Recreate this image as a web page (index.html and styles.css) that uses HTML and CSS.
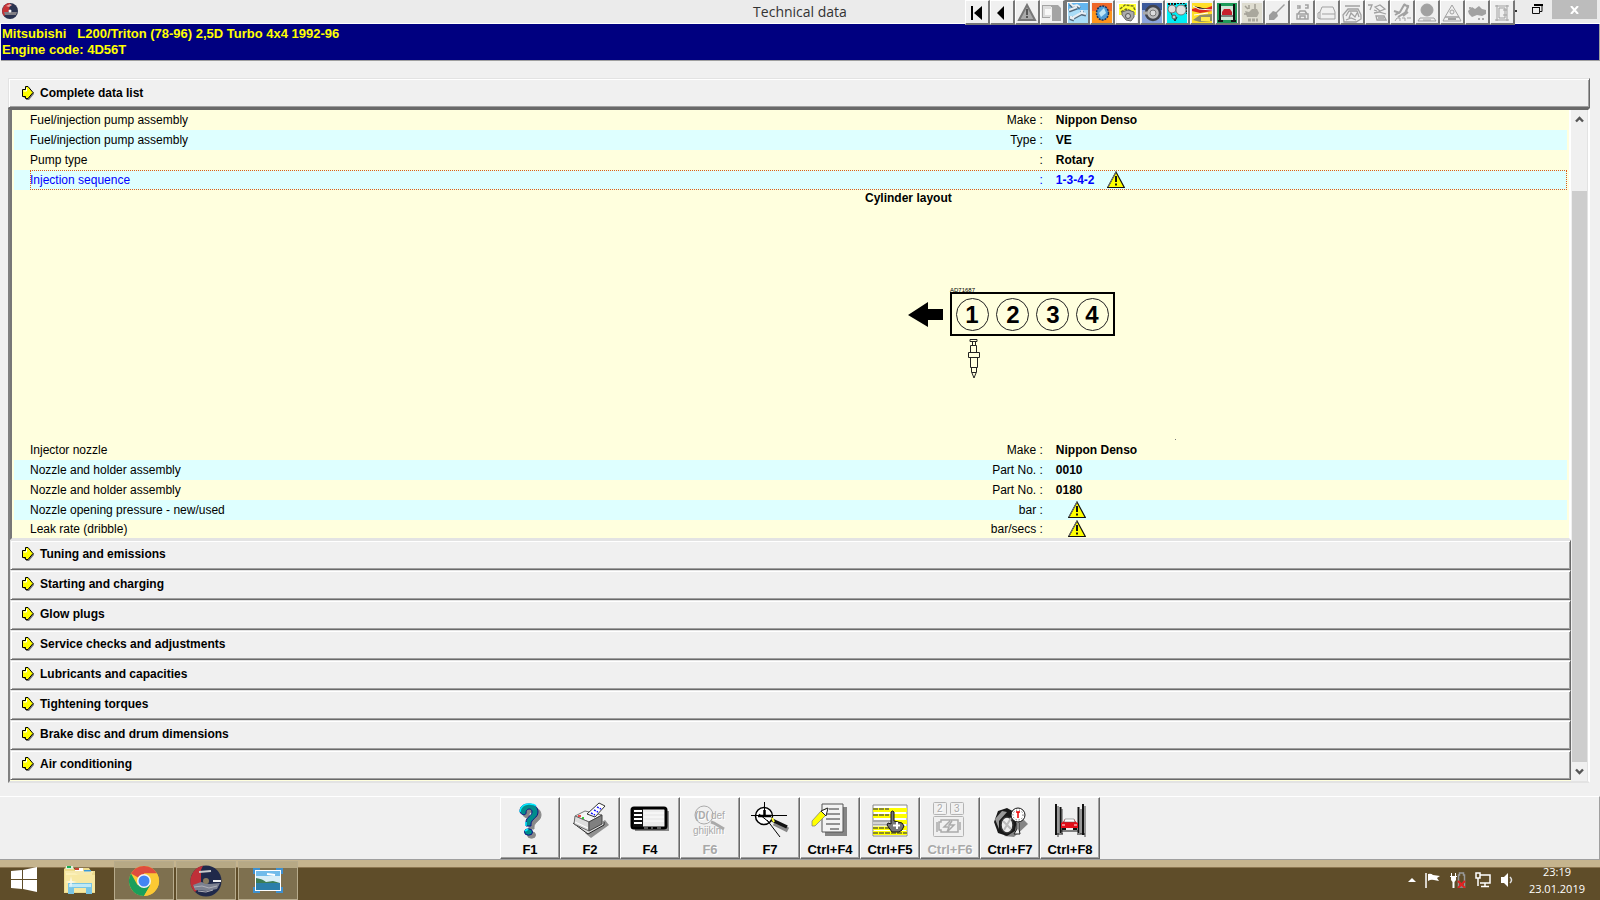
FILE: index.html
```html
<!DOCTYPE html>
<html lang="en">
<head>
<meta charset="utf-8">
<title>Technical data</title>
<link rel="stylesheet" href="styles.css">
</head>
<body>
<svg class="defs" aria-hidden="true">
  <symbol id="warn" viewBox="0 0 18 18"><path d="M9 1L17.300 16.500H.7z" fill="#ff0" stroke="#111" stroke-width="1.200"/><path d="M8 5h2v6H8zM8 12.500h2v2H8z" fill="#111"/><path d="M9 1L1 16" stroke="#777" fill="none"/></symbol>
  <symbol id="arrow" viewBox="0 0 13 14"><path d="M2 12h3v2h3l5-6V6" fill="#777"/><path d="M1.500 3.500h3V.5h2.500l5 6-5 6H4.500v-2h-3z" fill="#ff0" stroke="#000"/><path d="M2.500 5h3V2" stroke="#fff" fill="none"/></symbol>
</svg>

<header class="titlebar">
  <div class="app-icon">
    <svg width="18" height="18" viewBox="0 0 18 18"><circle cx="9" cy="9" r="8" fill="#2b3350"/><path d="M9 1A8 8 0 0 0 3 14l5-5z" fill="#c63336"/><path d="M3 10h13l-1 3H4z" fill="#817f86"/><path d="M5 4l4-2 2 1-3 2z" fill="#eba0a0"/><circle cx="9" cy="9" r="1.500" fill="#fff"/></svg>
  </div>
  <h1 class="title">Technical data</h1>
  <div class="title-right">
    <nav class="tools" aria-label="Data modules">
      <button aria-label="First"><svg viewBox="0 0 20 20"><path d="M4 3h2v14H4zM15 3v14L7 10z"/></svg></button>
      <button aria-label="Previous"><svg viewBox="0 0 20 20"><path d="M12 3v14L5 10z"/></svg></button>
      <button aria-label="Warnings"><svg viewBox="0 0 20 20"><path d="M10 2L18 17H2z" fill="#aaa" stroke="#777" stroke-width="2"/><path d="M9 6h2v6H9zM9 13h2v2H9z" fill="#555"/></svg></button>
      <button aria-label="Vehicle"><svg viewBox="0 0 20 20"><path d="M0 2h16l3 3v13h-9V7H8v8H0z" fill="#a4a4a4"/><path d="M2 4h8v3H7v6H2z" fill="#eee"/><path d="M1 3h8v11H1z" fill="#ddd"/><path d="M3 6h6v6H3z" fill="#f8f8f8"/></svg></button>
      <button class="active" aria-label="Technical data"><svg viewBox="0 0 20 20"><rect width="20" height="20" fill="#a9dcf7"/><path d="M0 0h20v7H0z" fill="#64b6ee"/><path d="M2 1l3 3 4-1 3 2M1 8l8-3" stroke="#536779" stroke-width="3" fill="none"/><path d="M2 0l3 3 4-1 3 2M1 7l8-3" stroke="#e7eef3" stroke-width="2" fill="none"/><path d="M4 16l11-6M3 13v3l3 1M14 8v3l4 1" stroke="#536779" stroke-width="3" fill="none"/><path d="M4 15l11-6M3 13v2l3 1M14 7v3l4 1" stroke="#e7eef3" stroke-width="2" fill="none"/></svg></button>
      <button aria-label="Timing belts"><svg viewBox="0 0 20 20"><rect width="20" height="20" fill="#ff951b"/><path d="M0 0h20v8H0z" fill="#ef6829"/><ellipse cx="10.500" cy="10" rx="6" ry="7" fill="#4e9bd5" stroke="#17315b" stroke-width="1.500" stroke-dasharray="2 1"/><path d="M7 10l5-5 2 5-5 4" fill="#bde5f5"/></svg></button>
      <button aria-label="Engine management"><svg viewBox="0 0 20 20"><rect width="20" height="20" fill="#fff"/><path d="M2 1h17v11H2z" fill="#ff3"/><path d="M3 6l5-4 8 1 2 4M4 9l5-3 5 2" fill="none" stroke="#767621" stroke-width="1.500" stroke-dasharray="3 1"/><path d="M5 9l6-2 6 2v5l-3 4-5-1-4-5z" fill="#aaa" stroke="#666"/><circle cx="11" cy="13" r="2.500" fill="#ccc" stroke="#555"/></svg></button>
      <button aria-label="Tyres"><svg viewBox="0 0 20 20"><rect width="20" height="20" fill="#8ca5dd"/><path d="M0 0h20v7H0z" fill="#3d5b9c"/><circle cx="11" cy="10" r="7" fill="#bbb" stroke="#40434b" stroke-width="2.500"/><circle cx="11" cy="10" r="3" fill="#ddd" stroke="#777"/><path d="M1 10h5" stroke="#aaa" stroke-width="3"/></svg></button>
      <button aria-label="Drive belts"><svg viewBox="0 0 20 20"><rect width="20" height="20" fill="#00edf4"/><path d="M1 1h8M10 0h7l3 5v6" fill="none" stroke="#111" stroke-width="2" stroke-dasharray="2 1"/><path d="M4 10l4 8 2-4" stroke="#222" fill="none"/><circle cx="5" cy="6" r="4" fill="#ddd" stroke="#777"/><circle cx="14" cy="7" r="5" fill="#ddd" stroke="#777"/><circle cx="7" cy="14" r="2" fill="#ccc" stroke="#555"/></svg></button>
      <button aria-label="Diagnostics"><svg viewBox="0 0 20 20"><rect width="20" height="20" fill="#ffdf29"/><path d="M0 6l7-2 5 2 8-3v5l-12 2-8-2z" fill="#dd2920"/><path d="M1 17l7-5 12-1v7L8 19z" fill="#8e8b68"/><path d="M9 14h9v4H9z" fill="#ffe94b"/><path d="M1 3l6 3 13 1M2 12l14-2" stroke="#fff"/></svg></button>
      <button aria-label="Lift points"><svg viewBox="0 0 20 20"><rect width="20" height="20" fill="#1e9b59"/><path d="M4 3h12v14H4z" fill="#cfe5d7"/><path d="M3 1v17M17 1v17M1 18h5M14 18h5" stroke="#111" stroke-width="2"/><path d="M5 9l2-3h6l2 3v3H5z" fill="#c71f2c"/><path d="M4 13h12" stroke="#222"/></svg></button>
      <button disabled aria-label="EPB"><svg viewBox="0 0 20 20"><rect width="20" height="20" fill="#dfddd0"/><path d="M3 8l4 1 3-3h5l2 4-2 4H5z" fill="#aaa89d"/><path d="M7 2v4M13 1v5M3 3l3 3M2 11h3" stroke="#a29f94" stroke-width="1.500"/><path d="M6 17h10" stroke="#aaa89d" stroke-dasharray="3 1" stroke-width="3"/></svg></button>
      <button disabled aria-label="Paint"><svg viewBox="0 0 20 20"><path d="M18 2l-8 8 1 3-4 4H2v-5l4-4 3 1 8-8z" fill="#9d9d9d"/></svg></button>
      <button disabled aria-label="Key programming"><svg viewBox="0 0 20 20" class="line"><path d="M5 3h3v2H5M13 2h3v3h-3M6 11l2-3h5l2 3M5 11h11v5H5zM8 16v-3h5v3" stroke-width="1.500"/></svg></button>
      <button disabled aria-label="Car body"><svg viewBox="0 0 20 20" class="line"><path d="M5 4h11l2 5v7H3V9zM3 9l-2 1v5l2 1M5 11h13"/></svg></button>
      <button disabled aria-label="Engine bay"><svg viewBox="0 0 20 20" class="line"><path d="M1 12l5-6h10l3 6v4l-5 3H2zM4 13l3-5h8l2 6M7 15l2-5 4 4 2-4M4 17l5-2 5 2M3 3h15" stroke-width="1.300"/></svg></button>
      <button disabled aria-label="Fuses"><svg viewBox="0 0 20 20" class="line"><path d="M1 2h4L3 7M8 4l5-2 5 4-5 2zM7 10l5-1 7 2M9 13h8l2 4h-9zM11 15h6M7 7l3 1" stroke-width="1.300"/></svg></button>
      <button disabled aria-label="Wiring"><svg viewBox="0 0 20 20" class="line"><path d="M3 12l5-3 4-7 4 1-2 6-8 5M12 1l4 3-3 6M2 8l6 2M11 13l5-4" stroke-width="2"/><path d="M3 18l2-3h3v3M10 15h3v3M15 15h4"/></svg></button>
      <button disabled aria-label="Airbag"><svg viewBox="0 0 20 20" class="line"><circle cx="10" cy="7" r="6" fill="#a1a1a1"/><path d="M3 15h14l2 3H1zM6 17h8"/></svg></button>
      <button disabled aria-label="ABS"><svg viewBox="0 0 20 20" class="line"><path d="M10 2l7 12H3zM3 14h14l2 4H1z"/><path d="M6 16h8" stroke="#555"/><circle cx="10" cy="9" r="2"/></svg></button>
      <button disabled aria-label="Battery"><svg viewBox="0 0 20 20"><path d="M1 8l4-4 3 2 4-3 3 3 4 1v4l-4 2-5-1-5 2-3-3z" fill="#a1a1a1"/><path d="M11 15h2v2h-2zM15 15h2v2h-2zM2 4h2v2H2z" fill="#aaa"/></svg></button>
      <button disabled aria-label="Wheel alignment"><svg viewBox="0 0 20 20" class="line"><path d="M5 2v16M15 2v16M3 3h14M3 17h14M7 5h6v10H7zM11 7h4M11 12h4"/></svg></button>
    </nav>
    <span class="tick"></span>
    <button class="restore" aria-label="Restore"><svg width="12" height="12" viewBox="0 0 12 12"><path d="M.5 3.500h7v6h-7zM3 1.500h7v6H8" fill="none" stroke="#111" stroke-width="1"/><path d="M0 3h8v1H0zM2 0h9v2H2z"/></svg></button>
    <button class="close" aria-label="Close"><svg width="9" height="8" viewBox="0 0 9 8"><path d="M1 0l7 8M8 0L1 8" stroke="#fff" stroke-width="2"/></svg></button>
  </div>
</header>

<div class="vehicle">
  <p><span class="make">Mitsubishi</span><span>L200/Triton (78-96) 2,5D Turbo 4x4 1992-96</span></p>
  <p>Engine code: 4D56T</p>
</div>

<main class="main">
  <button class="section complete"><svg><use href="#arrow"/></svg>Complete data list</button>
  <div class="panel">
    <div class="content">
      <div class="list">
        <table>
          <colgroup><col class="c-name"><col class="c-unit"><col></colgroup>
          <tbody>
            <tr><td>Fuel/injection pump assembly</td><td>Make :</td><td>Nippon Denso</td></tr>
            <tr class="alt"><td>Fuel/injection pump assembly</td><td>Type :</td><td>VE</td></tr>
            <tr><td>Pump type</td><td>:</td><td>Rotary</td></tr>
            <tr class="alt selected"><td>Injection sequence</td><td>:</td><td>1-3-4-2<svg class="warn"><use href="#warn"/></svg></td></tr>
            <tr class="figure"><td colspan="3">
              <figure>
                <figcaption>Cylinder layout</figcaption>
                <svg width="320" height="234" viewBox="0 0 320 234">
                  <path d="M43 109l20-13v7h15v11H63v7z"/>
                  <rect x="86" y="87" width="163" height="42" fill="none" stroke="#000" stroke-width="2"/>
                  <g fill="none" stroke="#222"><circle cx="107.500" cy="108.500" r="16"/><circle cx="147.500" cy="108.500" r="16"/><circle cx="187.500" cy="108.500" r="16"/><circle cx="227.500" cy="108.500" r="16"/></g>
                  <g class="cyl"><text x="107" y="117">1</text><text x="148" y="117">2</text><text x="188" y="117">3</text><text x="227" y="117">4</text></g>
                  <text class="plate" x="85" y="86">AD71687</text>
                  <path d="M105 133.500h7v2h-7zM107.500 135.500v4M110.500 135.500v4M105.500 139.500h6v7h-6zM103.500 146.500h11v5h-11zM105.500 151.500h7v10h-7zM106.500 161.500h5v5h-5zM107 167l2 5 2-5" fill="none" stroke="#222"/>
                  <path d="M310 233h1v1h-1z" fill="#777"/>
                </svg>
              </figure>
            </td></tr>
            <tr><td>Injector nozzle</td><td>Make :</td><td>Nippon Denso</td></tr>
            <tr class="alt"><td>Nozzle and holder assembly</td><td>Part No. :</td><td>0010</td></tr>
            <tr><td>Nozzle and holder assembly</td><td>Part No. :</td><td>0180</td></tr>
            <tr class="alt"><td>Nozzle opening pressure - new/used</td><td>bar :</td><td><svg class="warn"><use href="#warn"/></svg></td></tr>
            <tr class="last"><td>Leak rate (dribble)</td><td>bar/secs :</td><td><svg class="warn"><use href="#warn"/></svg></td></tr>
          </tbody>
        </table>
      </div>
      <button class="section"><svg><use href="#arrow"/></svg>Tuning and emissions</button>
      <button class="section"><svg><use href="#arrow"/></svg>Starting and charging</button>
      <button class="section"><svg><use href="#arrow"/></svg>Glow plugs</button>
      <button class="section"><svg><use href="#arrow"/></svg>Service checks and adjustments</button>
      <button class="section"><svg><use href="#arrow"/></svg>Lubricants and capacities</button>
      <button class="section"><svg><use href="#arrow"/></svg>Tightening torques</button>
      <button class="section"><svg><use href="#arrow"/></svg>Brake disc and drum dimensions</button>
      <button class="section"><svg><use href="#arrow"/></svg>Air conditioning</button>
    </div>
    <div class="scrollbar">
      <button aria-label="Scroll up"><svg width="9" height="7" viewBox="0 0 9 7"><path d="M1 5.500L4.500 2 8 5.500" fill="none" stroke="#555" stroke-width="2.400"/></svg></button>
      <div class="track"><div class="thumb"></div></div>
      <button aria-label="Scroll down"><svg width="9" height="7" viewBox="0 0 9 7"><path d="M1 1.500L4.500 5 8 1.500" fill="none" stroke="#555" stroke-width="2.400"/></svg></button>
    </div>
  </div>
</main>

<div class="fbar">
  <button><svg viewBox="0 0 40 40"><g class="shadowed"><path d="M10 10c0-5 4-7 9-7s9 3 9 8c0 6-7 7-7 12v2h-5v-4c0-5 6-6 6-10 0-2-1-3-3-3s-3 2-3 4c0 3-6 2-6-2z" fill="#008c8c" stroke="#111184"/><ellipse cx="18.500" cy="31" rx="4" ry="3.200" fill="#008c8c" stroke="#111184"/></g><path d="M10 11c0-5 4-8 9-8 3 0 6 1 7 2M16 25v-4" fill="none" stroke="#0ef" stroke-width="1.500"/><path d="M15 30l3-2" stroke="#0ef" stroke-width="2"/></svg>F1</button>
  <button><svg viewBox="0 0 40 40"><path d="M15 32l6 5 18-13-4-5z" fill="#909090"/><path d="M3 22l15 11 16-9v-3" fill="#ddd" stroke="#222"/><path d="M5 15l10-5 17 4-13 7z" fill="#f4f4f4" stroke="#777"/><path d="M5 15l14 6v9L4 23z" fill="#ddd" stroke="#666"/><path d="M19 21l13-7v9l-13 7z" fill="#808080" stroke="#444"/><path d="M5 21l13 6" stroke="#fff"/><path d="M17 13L29 2l6 3-10 11z" fill="#fff" stroke="#333"/><path d="M21 12l4 2M24 9l4 2M27 6l4 2" stroke="#1818ff" stroke-width="1.500" stroke-dasharray="2 1"/><path d="M8 15h3" stroke="#e11" stroke-width="1.500"/><path d="M12 17h2" stroke="#0b0" stroke-width="1.500"/></svg>F2</button>
  <button><svg viewBox="0 0 40 40"><path d="M5 30h34V10h-4v14H5z" fill="#888"/><rect x="2" y="7" width="34" height="20" rx="2" fill="#ececec" stroke="#000" stroke-width="3"/><path d="M3 8h10v18H3z" fill="#111"/><path d="M4 10h8M4 14h8M4 18h8M4 22h8" stroke="#fff" stroke-width="2"/><path d="M14 12h20M14 16h20M14 20h20" stroke="#fff"/><path d="M14 27h4M21 27h2M27 27h4" stroke="#aaa"/></svg>F4</button>
  <button disabled><svg viewBox="0 0 40 40"><g class="ghost"><text x="5" y="18" font-weight="bold">(D(</text><text x="21" y="18">def</text><text x="3" y="33">ghijklm</text></g><circle cx="14" cy="14" r="9" fill="none" stroke="#aaa"/><path d="M21 21l3 1 10 6" stroke="#aaa" stroke-width="3" fill="none"/></svg>F6</button>
  <button><svg viewBox="0 0 40 40"><circle cx="14" cy="15" r="8.500" fill="#fff" stroke="#000" stroke-width="1.500"/><path d="M14.500 1v14M1 14.500h36M9 13l11 9M17 19l13 17" fill="none" stroke="#000"/><path d="M8 15h13M14.500 9v6" stroke="#000" stroke-width="2.500"/><path d="M24 22l14 7" stroke="#888" stroke-width="5"/><path d="M22 19l15 7" stroke="#111" stroke-width="3.500"/><path d="M22 17l2 4" stroke="#ff3" stroke-width="2"/></svg>F7</button>
  <button><svg viewBox="0 0 40 40"><path d="M15 6h22v29H15z" fill="#858585"/><path d="M12 3h21v28H12z" fill="#f3f3f3" stroke="#555"/><path d="M19 8h10M16 13h14M16 18h14M16 23h14M20 28h9" stroke="#333"/><path d="M2 20v5h3l11-11 1-7-6 3z" fill="#ff0" stroke="#777" stroke-width=".700"/><path d="M11 10l7-3-2 8z" fill="#fff" stroke="#222"/></svg>Ctrl+F4</button>
  <button><svg viewBox="0 0 40 40"><path d="M3 4h34v31H3z" fill="#fff" stroke="#888"/><path d="M3 9h34M3 15h34M3 21h34M3 27h34M3 32h34" stroke="#ff0" stroke-width="4"/><path d="M3 8h16M3 14h16M3 27h16M3 32h34" stroke="#676733" stroke-width="1.500" stroke-dasharray="5 1"/><path d="M3 19h18v6H3z" fill="#aaa"/><path d="M3 22h18M3 25h18" stroke="#fff"/><path d="M21 11q1.500-2 3 0v9l8 2 2 3-2 4-3 2h-7l-5-7 1-2 3 1z" fill="#777" stroke="#111"/><path d="M27 21v7M23 24.500h7" stroke="#fff" stroke-width="2"/></svg>Ctrl+F5</button>
  <button disabled><svg viewBox="0 0 40 40"><g fill="none" stroke="#b4b4b4"><rect x="3.500" y="1.500" width="13" height="12" rx="1"/><rect x="20.500" y="1.500" width="13" height="12" rx="1"/><rect x="3.500" y="15.500" width="30" height="20" rx="1"/></g><path d="M9 21h2v-2h17v12H11v-2H9zM7 21v10M30 21v8M20 20l-6 6h5l-2 5 7-7h-5l3-4" fill="none" stroke="#aaa" stroke-width="1.500"/><g class="digits"><text x="7" y="11">2</text><text x="24" y="11">3</text></g></svg>Ctrl+F6</button>
  <button><svg viewBox="0 0 40 40"><path d="M14 35l10 1 14-13-6-6z" fill="#858585"/><path d="M8 10l9-3 11 6-3 17-8 5-9-3-4-11z" fill="#191919"/><path d="M5 18l7-8 5 1-8 9v8z" fill="#999"/><ellipse cx="17" cy="24" rx="6" ry="8" fill="#eee" stroke="#333" stroke-width="1.500"/><path d="M14 29l7-12M13 20l8 8" stroke="#bbb" stroke-width="2"/><circle cx="28" cy="14" r="7" fill="#fff" stroke="#111"/><circle cx="28" cy="14" r="5" fill="none" stroke="#555" stroke-dasharray="1 2"/><path d="M28 11v6M26 11h4" stroke="#e00" stroke-width="1.500"/><path d="M27 22v6l-3 5h6l-1-5v-6" fill="#eee" stroke="#222"/></svg>Ctrl+F7</button>
  <button><svg viewBox="0 0 40 40"><path d="M8 5v31M12 8v25M31 8v25M35 5v31" stroke="#999" stroke-width="2"/><path d="M6 3v31M10.500 6v26M28.500 6v26M33 3v31" stroke="#111" stroke-width="2"/><path d="M5 33h8M27 33h8M10 30h19" stroke="#111"/><path d="M11 22l2-1 2-3h9l2 3 2 1v5H11z" fill="#e20d18"/><path d="M15 18h9l1 3H14z" fill="#fff" stroke="#555" stroke-width=".500"/><path d="M12 27h4v2h-4zM23 27h4v2h-4z" fill="#111"/><path d="M12 24h3M24 24h3" stroke="#fff"/></svg>Ctrl+F8</button>
</div>

<footer class="taskbar">
  <button class="start" aria-label="Start"><svg width="28" height="26" viewBox="0 0 28 26"><path d="M1 4l11-1v9H1zM13 3l14-3v12H13zM1 13h11v9L1 21zM13 13h14v12l-14-3z" fill="#fff"/></svg></button>
  <button class="explorer" aria-label="File Explorer"><svg width="34" height="30" viewBox="0 0 34 30"><path d="M1 4l2-2h7l2 3h5l1-2h8l2 3h4v22H1z" fill="#eddb8d"/><path d="M3 1h7v3H3z" fill="#dff0df"/><path d="M4 1h4v2H4z" fill="#1cad53"/><path d="M12 3h8v3h-8z" fill="#fff"/><path d="M12 3h4v2h-4z" fill="#ca4535"/><path d="M21 5h7v2h-7z" fill="#3b9ad5"/><path d="M2 8h10l3 2h17v17H2z" fill="#f7e8a3"/><path d="M2 7h28M3 9h26" stroke="#fff7cc"/><path d="M5 18h24v11h-6v-6H11v6H5z" fill="#79c5e5"/><path d="M6 19h22v3H6z" fill="#bfe8f6"/><path d="M8 11l1 5 5 1-5 1-1 5-1-5-5-1 5-1z" fill="#fff" opacity=".700"/></svg></button>
  <button class="task" aria-label="Chrome"><svg width="32" height="32" viewBox="0 0 32 32"><circle cx="16" cy="16" r="15" fill="#fcc934"/><path d="M16 16L3 8.500A15 15 0 0 1 29 8.500H16z" fill="#de4c3e"/><path d="M3 8.500A15 15 0 0 0 16 31l6.500-11.200L16 16l-6.500 4z" fill="#1a9f5b"/><path d="M16 8.500h13A15 15 0 0 1 16 31l6.500-11z" fill="#fcc934"/><circle cx="16" cy="16" r="7" fill="#f5f5f5"/><circle cx="16" cy="16" r="5.500" fill="#4385f4"/></svg></button>
  <button class="task" aria-label="Technical data"><svg width="32" height="32" viewBox="0 0 32 32"><circle cx="16" cy="16" r="15.500" fill="#20294a"/><path d="M13 .8A15.500 15.500 0 0 0 5 27l6-6V5z" fill="#bf3038"/><path d="M3 20l8-3 8 2 11-1-3 6-10 2-12-1z" fill="#7c8190"/><path d="M4 22l8-1 7 2 8-2M8 26l8 1 7-2" stroke="#b0b0b8" fill="none"/><path d="M9 7l12-1" stroke="#ccc" stroke-width="2"/><circle cx="16" cy="16" r="3" fill="#887b60"/><path d="M23 16h8" stroke="#eee" stroke-width="2"/></svg></button>
  <button class="task" aria-label="Pictures"><svg width="32" height="28" viewBox="0 0 32 28"><path d="M1 1h7v6H1zM24 1h7v6h-7zM1 20h7v6H1zM24 20h7v6h-7z" fill="#3e90cf"/><rect x="3" y="3" width="26" height="21" fill="#fff"/><path d="M4 4h24v19H4z" fill="#70bbea"/><path d="M4 9h24v8H4z" fill="#d8eef7"/><path d="M4 11q7 1 10 4l7-1 7 2H4z" fill="#3d7d56"/><path d="M4 16h24v7H4z" fill="#2c7ea9"/><path d="M15 7l8 1" stroke="#fff" stroke-width="2"/></svg></button>
  <div class="tray">
    <svg width="8" height="14" viewBox="0 0 8 14"><path d="M4 5l4 4H0z" fill="#fff"/></svg>
    <svg width="16" height="16" viewBox="0 0 16 16"><path d="M1 1v15" stroke="#fff" stroke-width="1.500"/><path d="M3 2q3-1 5 1l7 1-3 2 2 3-5-1q-3-1-6 1z" fill="#fff"/></svg>
    <svg width="16" height="16" viewBox="0 0 16 16"><path d="M1 4h5v4L4.500 10v6h-2v-6L1 8zM1 1h1v3H1zM5 1h1v3H5zM0 4h7v1H0z" fill="#fff"/><path d="M8.500 15V3h1V1h4v2h1v12z" fill="none" stroke="#999" stroke-width="1.500"/><path d="M8 9l7 7M15 9l-7 7" stroke="#e32222" stroke-width="2"/></svg>
    <svg width="16" height="16" viewBox="0 0 16 16"><path d="M5 3h10v8H5M10 11v3M6 14.500h8M1 1h4v5H1zM3 6v8" fill="none" stroke="#fff" stroke-width="1.500"/></svg>
    <svg width="16" height="16" viewBox="0 0 16 16"><path d="M1 5h3l4-4v14l-4-4H1z" fill="#fff"/><path d="M10 5q3 3 0 6" fill="none" stroke="#ddd" stroke-width="1.500"/></svg>
    <div class="clock"><div>23:19</div><div>23.01.2019</div></div>
  </div>
</footer>
</body>
</html>
```
FILE: styles.css
```css
* { box-sizing: border-box; }
body {
  margin: 0;
  min-height: 100vh;
  display: flex;
  flex-direction: column;
  background: #f0f0f0;
  color: #000;
  font: 12px/20px "Liberation Sans", Arial, sans-serif;
}
button { margin: 0; padding: 0; border: 0; background: none; color: inherit; font: inherit; }
p, h1, figure { margin: 0; }
.defs { position: absolute; width: 0; height: 0; }

.titlebar {
  display: grid;
  grid-template-columns: 1fr auto 1fr;
  height: 24px;
  background: #ebebeb;
  border-bottom: 1px solid #fff;
}
.app-icon { padding: 2px 1px; }
.app-icon svg, .tools svg { display: block; }
.title { font: 14px/24px "Open Sans", "Noto Sans", sans-serif; color: #333; }
.title-right { display: flex; justify-content: flex-end; align-items: flex-start; padding-right: 3px; }
.tools { display: flex; position: relative; }
.tools button {
  width: 25px;
  height: 25px;
  padding: 2px 1px 0;
  background: #f0f0f0;
  border: 1px solid #fff;
  border-right: 2px solid #777;
  border-bottom: 2px solid #777;
}
.tools button.active { border: 2px solid #777; padding: 1px 0 0 1px; background: #fff; }
.tools svg { width: 20px; height: 20px; }
.line { fill: none; stroke: #a1a1a1; stroke-width: 1; }
.tick { width: 2px; height: 2px; margin: 10px 15px 0 0; background: #333; }
.restore { width: 12px; height: 12px; margin: 4px 8px 0 0; }
.restore svg { display: block; }
.close { display: flex; align-items: center; justify-content: center; width: 45px; height: 19px; background: #bcbcbc; }

.vehicle {
  height: 37px;
  margin: 0 0 0 1px;
  padding: 2px 1px;
  background: #000080;
  border-bottom: 1px solid #a0a0a0;
  border-right: 1px solid #a0a0a0;
  color: #ff0;
  font-size: 13px;
  font-weight: bold;
  line-height: 16px;
}
.make { margin-right: 11px; }

.main { flex: 1; padding: 17px 10px 13px 8px; }
.section {
  display: flex;
  align-items: center;
  gap: 6px;
  width: 100%;
  height: 30px;
  padding: 0 0 3px 10px;
  border: 1px solid;
  border-color: #e3e3e3 #696969 #696969 #e3e3e3;
  box-shadow: inset 1px 1px #fff, inset -1px -1px #a0a0a0;
  background: #f0f0f0;
  font-weight: bold;
  text-align: left;
}
.section svg { width: 13px; height: 14px; }
.complete { padding-left: 12px; padding-bottom: 1px; }
.panel {
  display: flex;
  border: solid;
  border-width: 2px;
  border-color: #696969 #fff #e3e3e3 #808080;
}
.content { flex: 1; background: #ffffde; padding-bottom: 1px; }
.list {
  border-left: 2px solid #777;
  border-right: 2px solid #fff;
  border-bottom: 2px solid #e3e3e3;
  padding: 0 2px;
}
table { width: 100%; table-layout: fixed; border-collapse: collapse; }
.c-name { width: 45%; }
.c-unit { width: 21.25%; }
td { height: 20px; padding: 0; line-height: 20px; }
td:first-child { padding-left: 16px; }
td:nth-child(2) { text-align: right; }
td:nth-child(3) { padding-left: 13px; font-weight: bold; }
.alt { background: #deffff; }
.selected { position: relative; color: #00f; }
.selected td:first-child::after { content: ""; position: absolute; inset: 0 0 0 16px; border: 1px dotted #e06010; }
.warn { width: 18px; height: 18px; margin-left: 12px; vertical-align: top; position: relative; top: 1px; }
.last td { height: 18px; line-height: 18px; }
.last .warn { top: 0; }
.figure td { height: 250px; padding: 0 0 0 54.8%; vertical-align: top; }
figcaption { font-weight: bold; line-height: 16px; }
figure svg { display: block; }
.cyl { font-size: 24px; font-weight: bold; text-anchor: middle; }
.plate { font-size: 6px; }

.scrollbar { width: 17px; display: flex; flex-direction: column; padding-left: 1px; border-right: 1px solid #e3e3e3; }
.scrollbar button { height: 19px; display: flex; align-items: center; justify-content: center; }
.track { flex: 1; padding-top: 62px; display: flex; }
.thumb { width: 15px; background: #cdcdcd; }

.fbar {
  display: flex;
  justify-content: center;
  height: 64px;
  border-top: 1px solid #fff;
  border-right: 1px solid #a0a0a0;
  border-bottom: 1px solid #a0a0a0;
}
.fbar button {
  display: flex;
  flex-direction: column;
  align-items: center;
  width: 60px;
  height: 62px;
  padding: 3px 0 0 1px;
  border: 1px solid;
  border-color: #fff #696969 #696969 #fff;
  box-shadow: inset -1px -1px #a0a0a0;
  font-size: 13px;
  font-weight: bold;
  line-height: 18px;
}
.fbar button:disabled { color: #a8a8a8; text-shadow: 1px 1px #fff; }
.fbar svg { width: 40px; height: 40px; overflow: visible; }
.shadowed { filter: drop-shadow(3px 3px 0 #888); }
.ghost { font-size: 10px; font-weight: normal; fill: #aaa; }
.digits { font-size: 10px; font-weight: normal; fill: #aaa; }

.taskbar {
  display: flex;
  height: 40px;
  background: linear-gradient(#c5b48e 0 7px, #8c7650 7px 8px, #5f4d29 8px);
}
.start { width: 48px; }
.explorer { width: 64px; }
.start svg { margin-top: 7px; }
.explorer svg { margin-top: 5px; }
.taskbar button { display: flex; justify-content: center; }
.taskbar .task {
  width: 60px;
  height: 39px;
  margin: 1px 0 0 2px;
  align-items: center;
  border: 1px solid #b7ab8c;
  background: linear-gradient(#b7a985 0 6px, #7e704f 6px);
}
.tray { margin-left: auto; display: flex; align-items: center; gap: 9px; padding-right: 15px; color: #fff; }
.clock { margin-left: 4px; text-align: center; font: 11px/17px "Open Sans", "Noto Sans", sans-serif; }
```
